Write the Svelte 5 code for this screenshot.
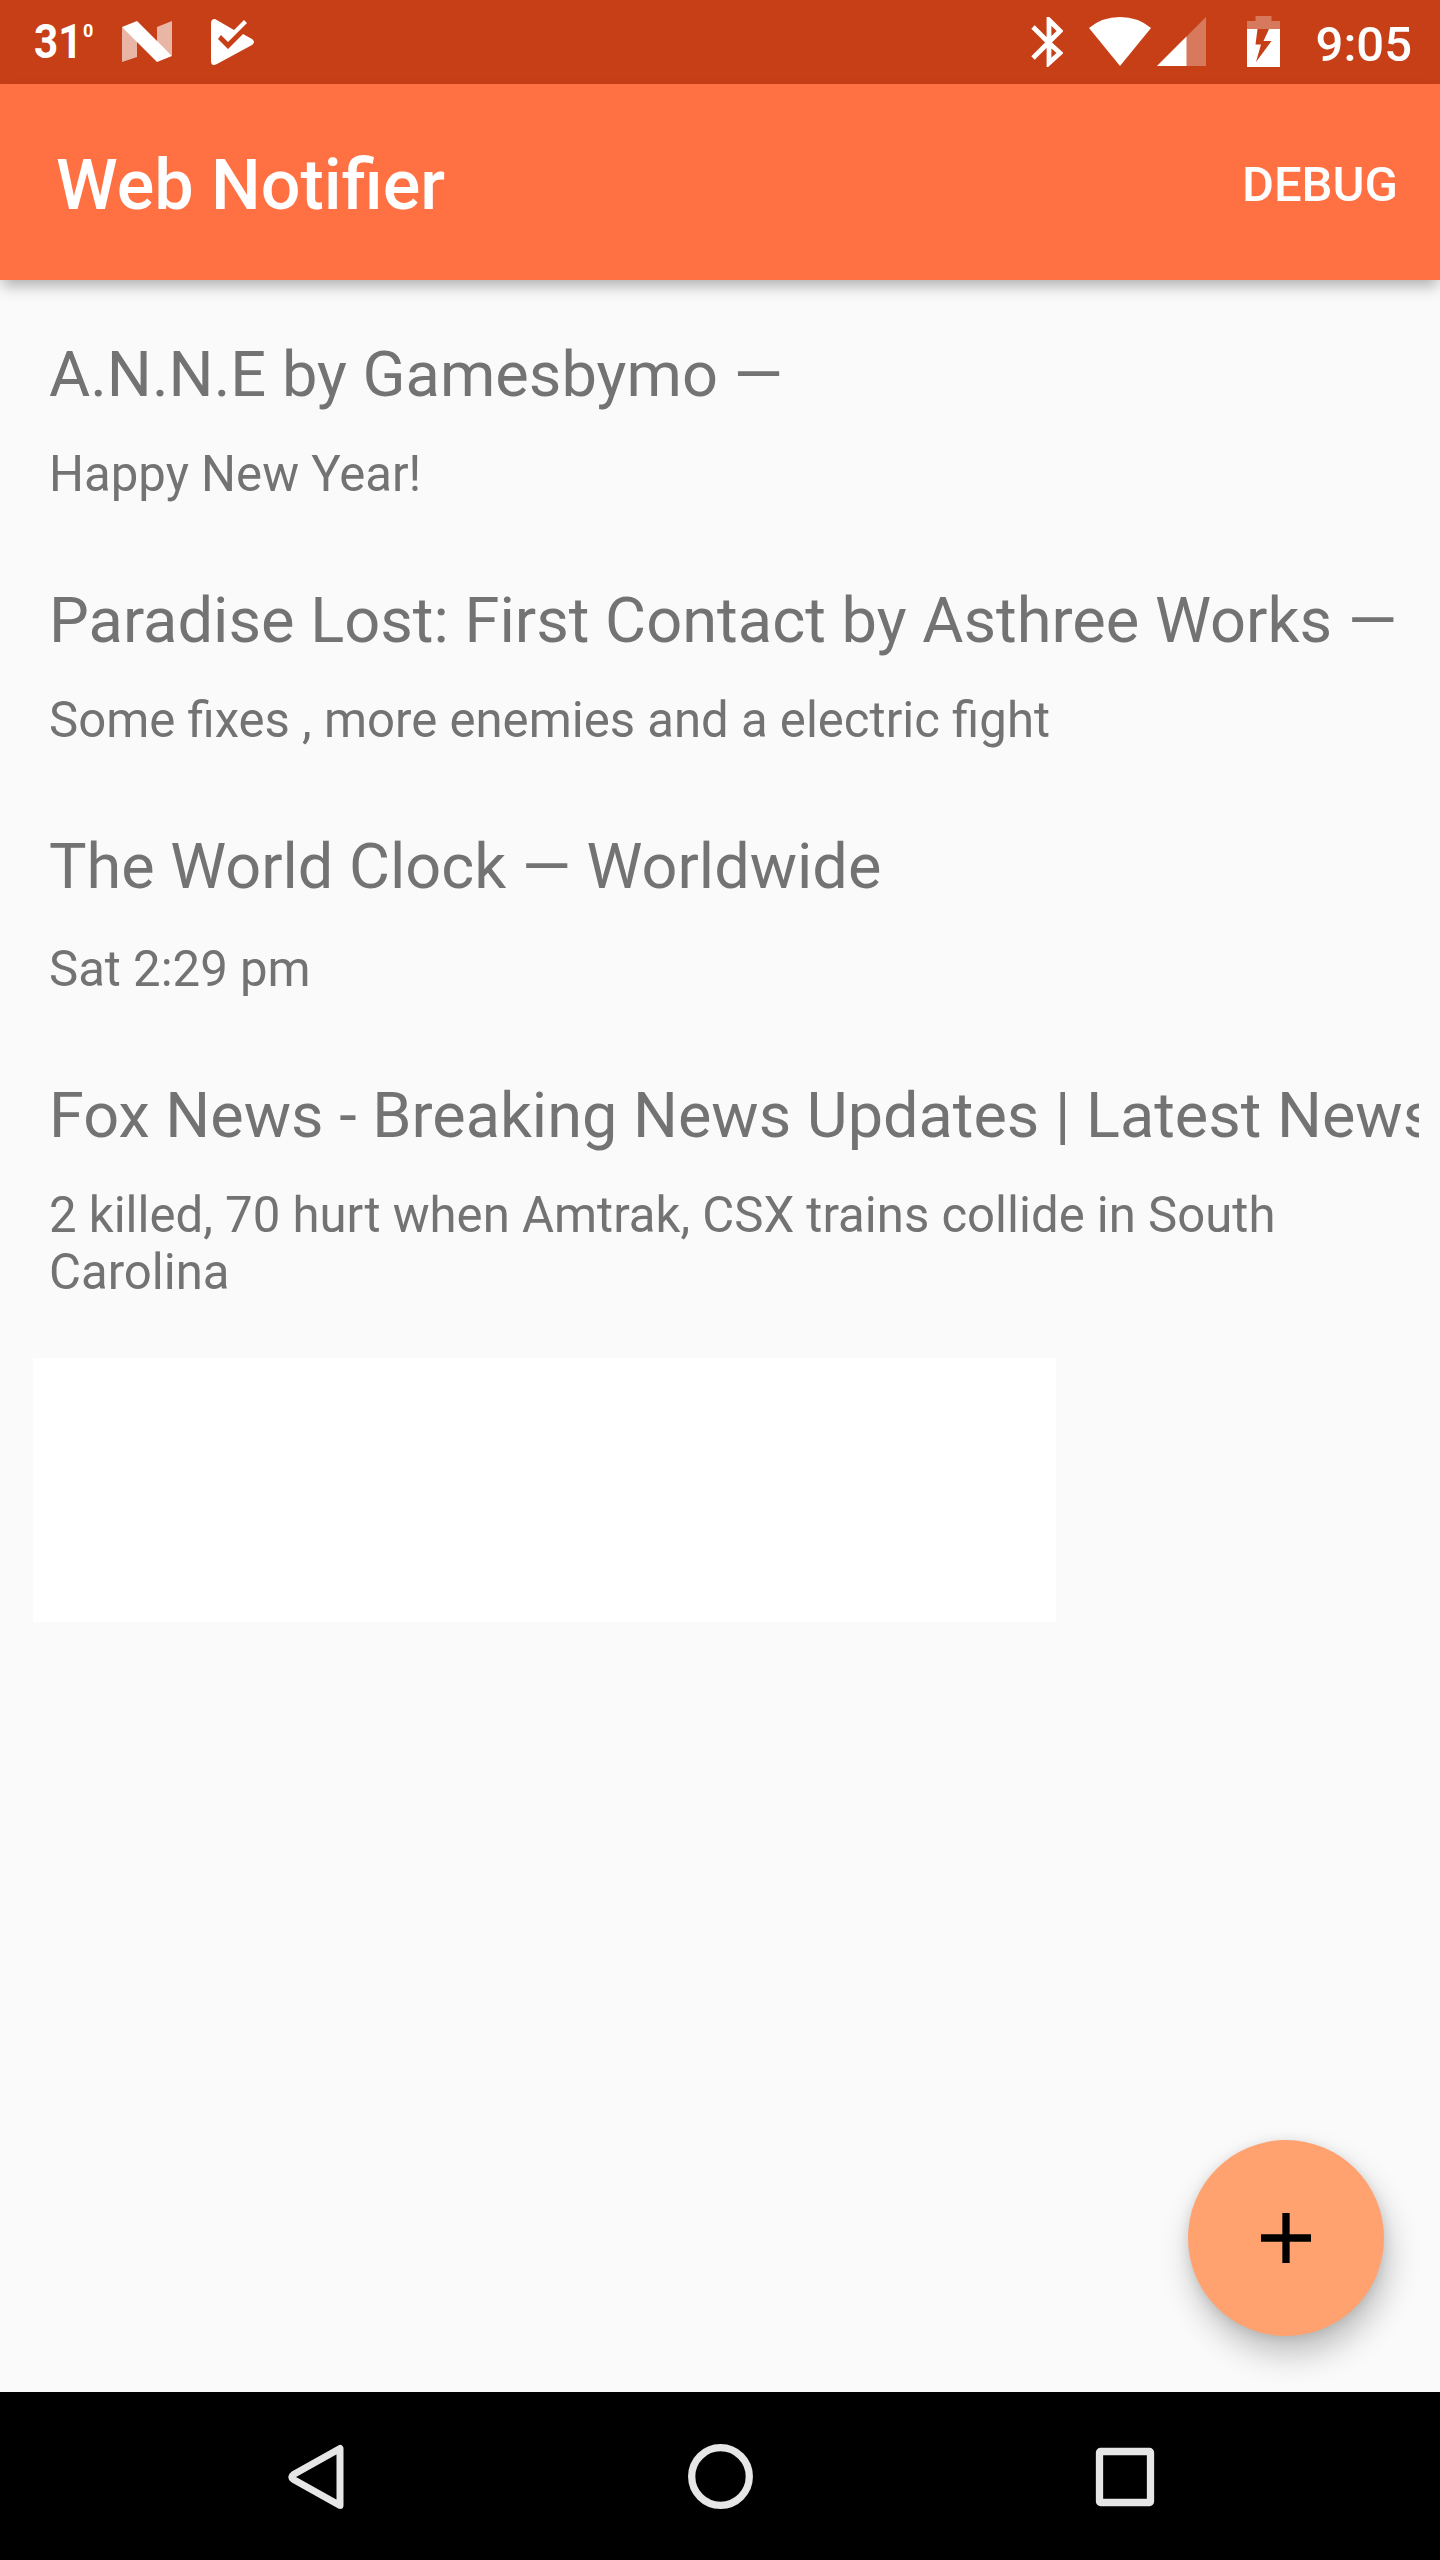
<script>
  const items = [
    { title: 'A.N.N.E by Gamesbymo —', body: 'Happy New Year!' },
    { title: 'Paradise Lost: First Contact by Asthree Works —', body: 'Some fixes , more enemies and a electric fight' },
    { title: 'The World Clock — Worldwide', body: 'Sat 2:29 pm', offset: true },
    { title: 'Fox News - Breaking News Updates | Latest News', body: '2 killed, 70 hurt when Amtrak, CSX trains collide in South Carolina' }
  ];
</script>

<div class="screen">
  <header class="status">
    <div class="temp"><span class="num">31</span><span class="deg">0</span></div>
    <svg class="n-icon" width="50" height="41" viewBox="0 0 50 41">
      <path d="M0 6L15 18V36L0 41ZM35 6L50 0V35L35 22Z" fill="#fff" fill-opacity=".62" />
      <path d="M0 6L15 0L50 35L35 41Z" fill="#fff" />
    </svg>
    <svg class="play-icon" width="44" height="46" viewBox="0 0 44 46">
      <path d="M0 4Q0 0 4 0L23 11L33 1L36 4L17 23L10 16L7 20L17 30L32 15L41 20Q45 23 41 26L6 45Q0 48 0 42Z" fill="#fff" />
    </svg>
    <svg class="bt" width="32" height="50" viewBox="0 0 32 50">
      <path d="M2 10L18 26L29 36L18 46V3L29 14L18 25L2 41" fill="none" stroke="#fff" stroke-width="4.8" />
    </svg>
    <svg class="wifi" width="62" height="49" viewBox="0 0 62 49">
      <path d="M0 11Q13 0 31 0T62 11L31 49Z" fill="#fff" />
    </svg>
    <svg class="cell" width="49" height="49" viewBox="0 0 49 49">
      <path d="M49 0V49H0Z" fill="#fff" fill-opacity=".3" />
      <path d="M29.500 19.500V49H0Z" fill="#fff" />
    </svg>
    <svg class="battery" width="33" height="51" viewBox="0 0 33 51">
      <path d="M8.500 0H24.500V5H33V13H0V5H8.500Z" fill="#fff" fill-opacity=".3" />
      <path fill-rule="evenodd" d="M0 13H33V51H0ZM10.500 13L8.500 28.500H14L9 46L24.500 25H16.500L22 13Z" fill="#fff" />
    </svg>
    <time>9:05</time>
  </header>

  <div class="appbar">
    <h1>Web Notifier</h1>
    <button class="debug">DEBUG</button>
  </div>

  <main>
    {#each items as item}
      <article class:offset={item.offset}>
        <h2>{item.title}</h2>
        <p>{item.body}</p>
      </article>
    {/each}
    <div class="blank"></div>
    <button class="fab" aria-label="Add">
      <svg width="50" height="50" viewBox="0 0 50 50"><path d="M25 0V50M0 25H50" stroke="#000" stroke-width="7.300" /></svg>
    </button>
  </main>

  <nav>
    <svg width="60" height="66" viewBox="0 0 60 66">
      <path d="M54 4.500V61.500L7.500 35.500Q4 33 7.500 30.500Z" fill="none" stroke="#e6e6e6" stroke-width="7" stroke-linejoin="round" />
    </svg>
    <svg width="66" height="66" viewBox="0 0 66 66">
      <circle cx="32.500" cy="32.500" r="28.800" fill="none" stroke="#e6e6e6" stroke-width="7.300" />
    </svg>
    <svg width="60" height="60" viewBox="0 0 60 60">
      <rect x="4.500" y="4.500" width="51" height="51" rx="1" fill="none" stroke="#e6e6e6" stroke-width="7.300" stroke-linejoin="round" />
    </svg>
  </nav>
</div>

<style>
  :global(body) { margin: 0; }
  .screen {
    width: 1440px;
    height: 2560px;
    display: flex;
    flex-direction: column;
    background: #fafafa;
    font-family: Roboto, sans-serif;
    overflow: hidden;
  }
  button { border: 0; padding: 0; font-family: inherit; }
  .status {
    flex: none;
    height: 84px;
    box-sizing: border-box;
    padding: 0 28px 0 33px;
    display: flex;
    align-items: flex-start;
    background: #c63f17;
    color: #fff;
  }
  .status svg { flex: none; }
  .temp { width: 88px; padding: 14px 0 0 1px; display: flex; }
  .num { width: 49px; font-size: 48px; font-weight: 700; line-height: 56px; transform: scaleX(.88); transform-origin: left; }
  .deg { font-size: 18px; line-height: 20px; padding-top: 7px; font-weight: 700; }
  .n-icon { margin-top: 21px; }
  .play-icon { margin: 19px auto 0 39px; }
  .bt { margin-top: 17px; }
  .wifi { margin: 17px 0 0 26px; }
  .cell { margin: 17px 0 0 6px; }
  .battery { margin: 16px 0 0 41px; }
  time { margin: 16px 0 0 36px; font-size: 49px; line-height: 58px; font-weight: 500; }
  .appbar {
    flex: none;
    height: 196px;
    box-sizing: border-box;
    padding: 5px 42px 0 56px;
    display: flex;
    align-items: center;
    justify-content: space-between;
    background: #ff7043;
    color: #fff;
    box-shadow: 0 8px 14px -2px rgba(0, 0, 0, .3);
  }
  h1 { margin: 0; font-size: 70.1px; font-weight: 500; line-height: 82px; }
  .debug { background: none; color: #fff; font-size: 49px; font-weight: 500; line-height: 58px; }
  main { flex: 1; min-height: 0; box-sizing: border-box; padding: 58px 21px 0 33px; position: relative; }
  article { height: 246px; box-sizing: border-box; padding-left: 16px; color: #737373; }
  article.offset { height: 249px; }
  h2 { margin: 0; height: 108px; font-size: 63px; font-weight: 400; line-height: 74px; white-space: nowrap; overflow: hidden; }
  article:nth-child(-n + 2) h2 { font-size: 63.18px; line-height: 72px; }
  p { margin: 0; font-size: 49.12px; line-height: 57px; }
  .offset p { padding-top: 3px; }
  article:nth-child(4) { height: 279px; }
  .blank { width: 1023px; height: 264px; background: #fff; }
  .fab {
    position: absolute;
    right: 56px;
    bottom: 56px;
    width: 196px;
    height: 196px;
    display: grid;
    place-items: center;
    border-radius: 50%;
    background: #ffa270;
    box-shadow: 4px 18px 32px rgba(0, 0, 0, .24), 0 2px 12px rgba(0, 0, 0, .1);
  }
  nav {
    flex: none;
    height: 168px;
    box-sizing: border-box;
    padding: 1px 285px 0 286px;
    display: flex;
    align-items: center;
    justify-content: space-between;
    background: #000;
  }
</style>
